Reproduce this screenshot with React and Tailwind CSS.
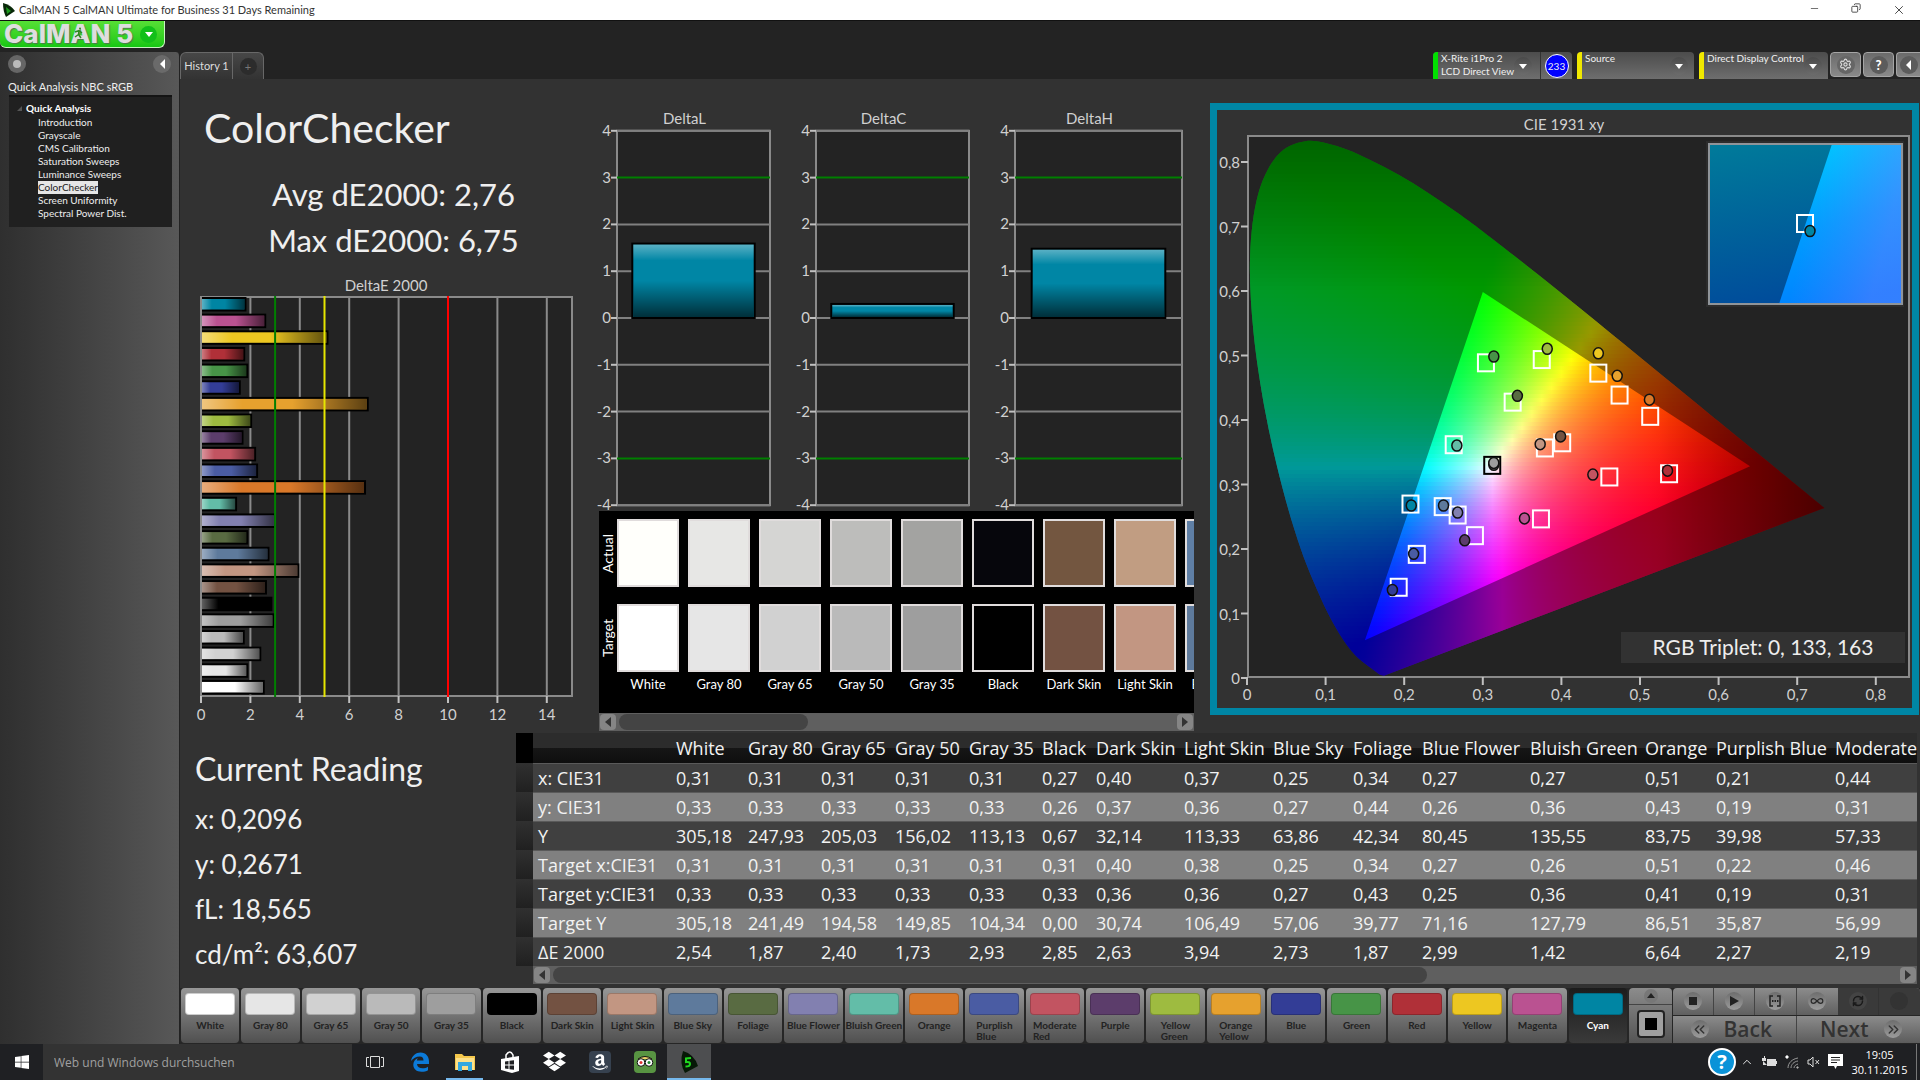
import React, { useState } from "react";
import { Minus, Copy, X, Settings, ChevronUp, ChevronsLeft, ChevronsRight, RefreshCw, Infinity as Loop } from "lucide-react";
import { FaDropbox, FaAmazon, FaWindows } from "react-icons/fa";

// name, target colour, dE2000
const PATCHES = [
  ["White", "#ffffff", 2.54],
  ["Gray 80", "#e6e6e6", 1.87],
  ["Gray 65", "#d1d1d1", 2.4],
  ["Gray 50", "#bababa", 1.73],
  ["Gray 35", "#9e9e9e", 2.93],
  ["Black", "#000000", 2.85],
  ["Dark Skin", "#735242", 2.63],
  ["Light Skin", "#c29682", 3.94],
  ["Blue Sky", "#5e7a9c", 2.73],
  ["Foliage", "#596b42", 1.87],
  ["Blue Flower", "#8280b0", 2.99],
  ["Bluish Green", "#63bda8", 1.42],
  ["Orange", "#d97829", 6.64],
  ["Purplish Blue", "#4a5ca3", 2.27],
  ["Moderate Red", "#c25461", 2.19],
  ["Purple", "#5c3d6b", 1.68],
  ["Yellow Green", "#9ebb40", 2.03],
  ["Orange Yellow", "#e6a12e", 6.75],
  ["Blue", "#333d96", 1.57],
  ["Green", "#479447", 1.87],
  ["Red", "#b03038", 1.75],
  ["Yellow", "#edc721", 5.12],
  ["Magenta", "#ba5291", 2.6],
  ["Cyan", "#0085a3", 1.8],
];

const ACTUAL = ["#fffffb", "#e7e7e5", "#d5d5d3", "#bdbdbb", "#a3a3a1", "#06060c", "#735640", "#c19d82", "#5f7fa5"];

const COLUMNS = [
  ["White", "w-[72px]"],
  ["Gray 80", "w-[73px]"],
  ["Gray 65", "w-[74px]"],
  ["Gray 50", "w-[74px]"],
  ["Gray 35", "w-[73px]"],
  ["Black", "w-[54px]"],
  ["Dark Skin", "w-[88px]"],
  ["Light Skin", "w-[89px]"],
  ["Blue Sky", "w-[80px]"],
  ["Foliage", "w-[69px]"],
  ["Blue Flower", "w-[108px]"],
  ["Bluish Green", "w-[115px]"],
  ["Orange", "w-[71px]"],
  ["Purplish Blue", "w-[119px]"],
  ["Moderate Red", "w-[130px]"],
];

const ROWS = [
  ["x: CIE31", "0,31 0,31 0,31 0,31 0,31 0,27 0,40 0,37 0,25 0,34 0,27 0,27 0,51 0,21 0,44"],
  ["y: CIE31", "0,33 0,33 0,33 0,33 0,33 0,26 0,37 0,36 0,27 0,44 0,26 0,36 0,43 0,19 0,31"],
  ["Y", "305,18 247,93 205,03 156,02 113,13 0,67 32,14 113,33 63,86 42,34 80,45 135,55 83,75 39,98 57,33"],
  ["Target x:CIE31", "0,31 0,31 0,31 0,31 0,31 0,31 0,40 0,38 0,25 0,34 0,27 0,26 0,51 0,22 0,46"],
  ["Target y:CIE31", "0,33 0,33 0,33 0,33 0,33 0,33 0,36 0,36 0,27 0,43 0,25 0,36 0,41 0,19 0,31"],
  ["Target Y", "305,18 241,49 194,58 149,85 104,34 0,00 30,74 106,49 57,06 39,77 71,16 127,79 86,51 35,87 56,99"],
  ["ΔE 2000", "2,54 1,87 2,40 1,73 2,93 2,85 2,63 3,94 2,73 1,87 2,99 1,42 6,64 2,27 2,19"],
];

// spectral locus, 2° observer
const LOCUS = [
  [0.1741, 0.005], [0.1689, 0.0069], [0.1644, 0.0109], [0.1566, 0.0177], [0.144, 0.0297], [0.1355, 0.0399],
  [0.1241, 0.0578], [0.1096, 0.0868], [0.0913, 0.1327], [0.0687, 0.2007], [0.0454, 0.295], [0.0235, 0.4127],
  [0.0082, 0.5384], [0.0039, 0.6548], [0.0139, 0.7502], [0.0389, 0.812], [0.0743, 0.8338], [0.1142, 0.8262],
  [0.1547, 0.8059], [0.1929, 0.7816], [0.2296, 0.7543], [0.2658, 0.7243], [0.3016, 0.6923], [0.3731, 0.6245],
  [0.4441, 0.5547], [0.5125, 0.4866], [0.5752, 0.4242], [0.627, 0.3725], [0.6915, 0.3083], [0.7347, 0.2653],
];

const TARGETS = [
  [0.304, 0.491], [0.375, 0.496], [0.447, 0.475], [0.474, 0.441], [0.513, 0.408], [0.338, 0.43],
  [0.263, 0.364], [0.401, 0.367], [0.379, 0.359], [0.461, 0.314], [0.537, 0.319], [0.208, 0.272],
  [0.249, 0.268], [0.268, 0.255], [0.29, 0.223], [0.374, 0.249], [0.216, 0.194], [0.193, 0.143],
];

const READINGS = [
  [0.314, 0.5, "#479447"], [0.382, 0.512, "#9ebb40"], [0.447, 0.505, "#edc721"], [0.471, 0.47, "#e6a12e"],
  [0.512, 0.433, "#d97829"], [0.344, 0.439, "#596b42"], [0.267, 0.362, "#63bda8"], [0.399, 0.376, "#735242"],
  [0.373, 0.364, "#c29682"], [0.44, 0.317, "#c25461"], [0.535, 0.323, "#b03038"], [0.209, 0.269, "#0085a3"],
  [0.25, 0.269, "#5e7a9c"], [0.268, 0.258, "#8280b0"], [0.277, 0.215, "#5c3d6b"], [0.353, 0.249, "#ba5291"],
  [0.212, 0.194, "#4a5ca3"], [0.185, 0.138, "#333d96"], [0.314, 0.332, "#777777"], [0.314, 0.335, "#9e9e9e"],
];

const cx = (v) => 30 + v * 786;
const cy = (v) => 569 - v * 645;

const xyToRgb = (x, y) => {
  const z = 1 - x - y;
  const rgb = [
    3.2406 * x - 1.5372 * y - 0.4986 * z,
    -0.9689 * x + 1.8758 * y + 0.0415 * z,
    0.0557 * x - 0.204 * y + 1.057 * z,
  ].map((c) => Math.max(0, c));
  const max = Math.max(...rgb, 0.001);
  const fade = Math.min(1, 1 - (x - 0.52) * 2.4, 1 - (y - 0.6) * 1.45);
  return `rgb(${rgb.map((c) => Math.round((c / max) * 255 * fade)).join(",")})`;
};

const smoothPath = (points) => {
  const p = points.map(([x, y]) => [cx(x), cy(y)]);
  let d = `M${p[0][0]} ${p[0][1]}`;
  for (let i = 0; i < p.length - 1; i++) {
    const a = p[i - 1] || p[i];
    const b = p[i];
    const c = p[i + 1];
    const e = p[i + 2] || c;
    d += ` C${b[0] + (c[0] - a[0]) / 6} ${b[1] + (c[1] - a[1]) / 6} ${c[0] - (e[0] - b[0]) / 6} ${c[1] - (e[1] - b[1]) / 6} ${c[0]} ${c[1]}`;
  }
  return d + " Z";
};

const LOCUS_PATH = smoothPath(LOCUS);
const GAMUT_PATH = `M${cx(0.3)} ${cy(0.6)} L${cx(0.64)} ${cy(0.33)} L${cx(0.15)} ${cy(0.06)} Z`;
const STRIPS = Array.from({ length: 136 }, (_, i) => 28 + i * 4);
const STOPS = Array.from({ length: 61 }, (_, i) => i / 60);

const CieChart = () => (
  <svg viewBox="0 0 695 598" className="block w-full h-auto font-[Lato,sans-serif]" role="img" aria-label="CIE 1931 xy">
    <defs>
      <clipPath id="locus">
        <path d={LOCUS_PATH} />
      </clipPath>
      {STRIPS.map((y) => (
        <linearGradient key={y} id={`strip${y}`} gradientUnits="userSpaceOnUse" x1={cx(0)} x2={cx(0.75)} y1="0" y2="0">
          {STOPS.map((s) => (
            <stop key={s} offset={s} stopColor={xyToRgb(s * 0.75, (569 - y - 2) / 645)} />
          ))}
        </linearGradient>
      ))}
      <linearGradient id="insetDark" x1="0" y1="0" x2="0.2" y2="1">
        <stop offset="0" stopColor="#007b9a" />
        <stop offset="1" stopColor="#004d9b" />
      </linearGradient>
      <linearGradient id="insetBright" x1="0.3" y1="0" x2="0.5" y2="1">
        <stop offset="0" stopColor="#00c6ff" />
        <stop offset="0.5" stopColor="#009dff" />
        <stop offset="1" stopColor="#0080ff" />
      </linearGradient>
      <linearGradient id="insetTint" x1="0.4" y1="0" x2="1" y2="0.2">
        <stop offset="0" stopColor="#7f7fff" stopOpacity="0" />
        <stop offset="1" stopColor="#7f7fff" stopOpacity="0.4" />
      </linearGradient>
    </defs>
    <text x="347" y="20" textAnchor="middle" className="text-[15px] fill-[#d0d0d0]">CIE 1931 xy</text>
    <rect x="31" y="26" width="661" height="541" fill="#232323" stroke="#8a8a8a" strokeWidth="2" />
    <g clipPath="url(#locus)">
      {STRIPS.map((y) => (
        <rect key={y} x="30" y={y} width="600" height="4" fill={`url(#strip${y})`} shapeRendering="crispEdges" />
      ))}
    </g>
    <path d={`${LOCUS_PATH} ${GAMUT_PATH}`} fillRule="evenodd" fill="#000" fillOpacity="0.4" />
    {[0, 1, 2, 3, 4, 5, 6, 7, 8].map((n) => (
      <g key={n} className="text-[15px] fill-[#d0d0d0]">
        <path d={`M${cx(n / 10)} 567v8M24 ${cy(n / 10) - 1}h7`} stroke="#c0c0c0" strokeWidth="2" />
        <text x={cx(n / 10)} y="590" textAnchor="middle">{n ? `0,${n}` : "0"}</text>
        <text x="23" y={cy(n / 10) + 5} textAnchor="end">{n ? `0,${n}` : "0"}</text>
      </g>
    ))}
    {TARGETS.map(([x, y]) => (
      <rect key={`${x}-${y}`} x={cx(x) - 8} y={cy(y) - 8} width="16" height="17" fill="none" stroke="#fff" strokeWidth="2" />
    ))}
    <rect x={cx(0.312) - 8} y={cy(0.332) - 8} width="16" height="17" fill="none" stroke="#000" strokeWidth="2" />
    {READINGS.map(([x, y, color]) => (
      <ellipse key={`${x}-${y}`} cx={cx(x)} cy={cy(y)} rx="5" ry="5.5" fill={color} stroke="#111" strokeWidth="1.5" />
    ))}
    {/* Zoomed inset */}
    <rect x="489" y="31" width="198" height="166" fill="#2c2c2c" />
    <rect x="492" y="34" width="193" height="160" fill="url(#insetDark)" />
    <path d="M615 34H685V194H562Z" fill="url(#insetBright)" />
    <path d="M615 34H685V194H562Z" fill="url(#insetTint)" />
    <rect x="492" y="34" width="193" height="160" fill="none" stroke="#8f9499" strokeWidth="2" />
    <rect x="580" y="105" width="16" height="17" fill="none" stroke="#fff" strokeWidth="2" />
    <ellipse cx="593" cy="121" rx="5" ry="5.5" fill="#0085a3" stroke="#111" strokeWidth="1.5" />
    {/* Triplet readout */}
    <rect x="404" y="522" width="284" height="31" fill="#323232" />
    <text x="546" y="545" textAnchor="middle" className="text-[21px] fill-[#ededed]">RGB Triplet: 0, 133, 163</text>
  </svg>
);

const DeltaEChart = () => {
  const x = (v) => 21 + v * 24.7;
  return (
    <svg viewBox="0 0 415 460" className="block w-full h-auto font-[Lato,sans-serif]" role="img" aria-label="DeltaE 2000">
      <defs>
        <linearGradient id="sheenX">
          <stop offset="0" stopColor="#fff" stopOpacity="0.4" />
          <stop offset="0.25" stopColor="#fff" stopOpacity="0" />
          <stop offset="0.55" stopColor="#000" stopOpacity="0" />
          <stop offset="1" stopColor="#000" stopOpacity="0.6" />
        </linearGradient>
      </defs>
      <text x="206" y="21" textAnchor="middle" className="text-[15px] fill-[#d0d0d0]">DeltaE 2000</text>
      <rect x="21" y="27" width="371" height="399" fill="#232323" stroke="#8a8a8a" strokeWidth="2" />
      {[0, 2, 4, 6, 8, 10, 12, 14].map((n) => (
        <g key={n}>
          <path d={`M${x(n)} 27V426`} stroke="#8a8a8a" strokeWidth="2" />
          <path d={`M${x(n)} 426v7`} stroke="#c0c0c0" strokeWidth="2" />
          <text x={x(n)} y="450" textAnchor="middle" className="text-[15px] fill-[#d0d0d0]">{n}</text>
        </g>
      ))}
      {[...PATCHES].reverse().map(([name, color, de], i) => (
        <g key={name}>
          <rect x="21" y={28 + i * 16.65} width={de * 24.7} height="12.5" fill={color} stroke="#000" strokeWidth="2" />
          <rect x="21" y={29 + i * 16.65} width={de * 24.7 - 1} height="10.5" fill="url(#sheenX)" />
        </g>
      ))}
      <path d="M21 27V426" stroke="#8a8a8a" strokeWidth="2" />
      <path d={`M${x(3)} 26V427`} stroke="#007f00" strokeWidth="2" />
      <path d={`M${x(5)} 26V427`} stroke="#e6e600" strokeWidth="2" />
      <path d={`M${x(10)} 26V427`} stroke="#ff0000" strokeWidth="2" />
    </svg>
  );
};

const DeltaChart = ({ title, width, value }) => {
  const plot = width - 46 + (width > 200 ? 11 : 0);
  const y = (v) => 215 - v * 46.8;
  const pad = plot * 0.1;
  return (
    <svg viewBox={`0 0 ${width} 408`} className="block w-full h-auto font-[Lato,sans-serif]" role="img" aria-label={title}>
      <defs>
        <linearGradient id="sheenY" x1="0" x2="0" y1="0" y2="1">
          <stop offset="0" stopColor="#fff" stopOpacity="0.35" />
          <stop offset="0.22" stopColor="#fff" stopOpacity="0" />
          <stop offset="0.5" stopColor="#000" stopOpacity="0" />
          <stop offset="1" stopColor="#000" stopOpacity="0.65" />
        </linearGradient>
      </defs>
      <text x={13 + plot / 2} y="21" textAnchor="middle" className="text-[15px] fill-[#d0d0d0]">{title}</text>
      <rect x="22" y={y(4)} width={plot} height={y(-4) - y(4)} fill="#232323" stroke="#8a8a8a" strokeWidth="2" />
      {[4, 3, 2, 1, 0, -1, -2, -3, -4].map((n) => (
        <g key={n}>
          <path d={`M22 ${y(n)}h${plot}`} stroke={Math.abs(n) === 3 ? "#007f00" : "#808080"} strokeWidth="2" />
          <path d={`M16 ${y(n)}h6`} stroke="#c0c0c0" strokeWidth="2" />
          <text x="16" y={y(n) + 5} textAnchor="end" className="text-[15px] fill-[#d0d0d0]">{n}</text>
        </g>
      ))}
      <rect x={22 + pad} y={y(value)} width={plot - pad * 2} height={y(0) - y(value)} fill="#0086a5" stroke="#000" strokeWidth="2" />
      <rect x={23 + pad} y={y(value) + 1} width={plot - pad * 2 - 2} height={y(0) - y(value) - 2} fill="url(#sheenY)" />
    </svg>
  );
};

const ScrollBar = ({ thumb, label }) => (
  <div className="flex items-center h-[18px] bg-[#5f5f5f] px-px gap-[3px]">
    <button aria-label={`Scroll ${label} left`} className="w-4 h-4 rounded bg-[#858585] flex items-center justify-center">
      <svg viewBox="0 0 6 10" className="w-[6px] h-[10px]"><path d="M6 0V10L0 5Z" fill="#333" /></svg>
    </button>
    <div className="flex-1 h-full py-px">
      <div className={`h-4 rounded-lg bg-[#444] ${thumb}`} />
    </div>
    <button aria-label={`Scroll ${label} right`} className="w-4 h-4 rounded bg-[#858585] flex items-center justify-center">
      <svg viewBox="0 0 6 10" className="w-[6px] h-[10px]"><path d="M0 0V10L6 5Z" fill="#333" /></svg>
    </button>
  </div>
);

const TitleBar = () => (
  <header className="h-[20px] bg-white flex items-center pl-[3px] text-[#333]">
    <svg viewBox="0 0 12 14" className="w-3 h-[14px] mr-1"><path d="M0 0Q8 2 12 8L3 14Q0 8 0 0Z" fill="#082808" /><path d="M3 4L8 8L4 11Z" fill="#1c9a1c" /></svg>
    <h1 className="text-[11px] flex-1 font-[Lato,sans-serif]">CalMAN 5 CalMAN Ultimate for Business 31 Days Remaining</h1>
    <div className="flex">
      <button aria-label="Minimize" className="w-[42px] flex justify-center"><Minus size={11} strokeWidth={1.5} /></button>
      <button aria-label="Restore" className="w-[42px] flex justify-center"><Copy size={10} strokeWidth={2} className="-scale-x-100" /></button>
      <button aria-label="Close" className="w-[43px] flex justify-center"><X size={14} strokeWidth={1.5} /></button>
    </div>
  </header>
);

const Caret = () => (
  <span className="w-[18px] h-[18px] rounded-full bg-linear-to-b from-[#4a4a4a] to-[#6c6c6c] flex items-center justify-center pointer-events-none">
    <svg viewBox="0 0 8 5" className="w-2 h-[5px]"><path d="M0 0H8L4 5Z" fill="#fff" /></svg>
  </span>
);

const Device = ({ title, option, bar, width, caret, children }) => (
  <div className={`flex h-[27px] rounded-t-sm overflow-hidden bg-linear-to-b from-[#4c4c4c] to-[#6e6e6e] text-[#f0f0f0] text-[10px] leading-[13px] ${width}`}>
    <span className={`w-[5px] ${bar}`} />
    <label className="flex-1 pl-[3px] flex flex-col relative">
      {title && <span>{title}</span>}
      <select aria-label={title || option} className="appearance-none bg-transparent outline-none h-[13px] w-full">
        <option>{option}</option>
      </select>
      <span className={`absolute top-[5px] ${caret}`}><Caret /></span>
    </label>
    {children}
  </div>
);

const TopBar = () => (
  <div className="flex justify-between items-end">
    <div className="flex h-[27px] rounded-t-md border border-b-0 border-[#686868] bg-linear-to-b from-[#474747] to-[#333] text-[#ddd] overflow-hidden">
      <button className="w-[52px] text-[11px] border-r border-[#686868]">History 1</button>
      <button aria-label="Add history" className="w-[30px] flex items-center justify-center">
        <span className="w-[17px] h-[17px] rounded-full bg-[#2c2c2c] text-[#777] text-[11px] leading-[17px]">+</span>
      </button>
    </div>
    <div className="flex items-start">
      <Device title="X-Rite i1Pro 2" option="LCD Direct View" bar="bg-[#00e000]" width="w-[139px] mr-[5px]" caret="right-2">
        <span className="w-[32px] border-l border-[#333] flex items-center justify-center">
          <span className="w-[24px] h-[24px] rounded-full bg-[#0000ff] border border-white text-[10px] leading-[22px] text-center">233</span>
        </span>
      </Device>
      <Device option="Source" bar="bg-[#f0e800]" width="w-[117px] mr-[5px]" caret="right-[6px]" />
      <Device option="Direct Display Control" bar="bg-[#f0e800]" width="w-[129px] mr-[2px]" caret="right-[6px]" />
      <div className="flex gap-[2px] h-[25px]">
        <button aria-label="Settings" className="w-[31px] rounded border border-[#a5a5a5] bg-linear-to-b from-[#6b6b6b] to-[#8a8a8a] flex items-center justify-center">
          <span className="w-[18px] h-[18px] rounded-full bg-[#666] flex items-center justify-center text-[#ddd]"><Settings size={13} /></span>
        </button>
        <button aria-label="Help" className="w-[31px] rounded border border-[#a5a5a5] bg-linear-to-b from-[#6b6b6b] to-[#8a8a8a] flex items-center justify-center">
          <span className="w-[18px] h-[18px] rounded-full bg-[#5c5c5c] text-white text-[13px] leading-[18px] font-black">?</span>
        </button>
        <button aria-label="Collapse panel" className="w-[24px] rounded-l border border-r-0 border-[#a5a5a5] bg-linear-to-b from-[#6b6b6b] to-[#8a8a8a] flex items-center justify-center">
          <span className="w-[18px] h-[18px] rounded-full bg-[#5c5c5c] flex items-center justify-center">
            <svg viewBox="0 0 5 10" className="w-[5px] h-[10px]"><path d="M5 0V10L0 5Z" fill="#fff" /></svg>
          </span>
        </button>
      </div>
    </div>
  </div>
);

const PAGES = [
  "Introduction",
  "Grayscale",
  "CMS Calibration",
  "Saturation Sweeps",
  "Luminance Sweeps",
  "ColorChecker",
  "Screen Uniformity",
  "Spectral Power Dist.",
];

const Sidebar = () => (
  <aside className="w-[180px] shrink-0 bg-linear-to-r from-[#2f2f2f] to-[#585858] border-r border-[#222] rounded-tr text-[#eee]">
    <div className="flex justify-between px-2 pt-[3px]">
      <button aria-label="Record" className="w-[18px] h-[18px] rounded-full bg-[#666] flex items-center justify-center">
        <span className="w-2 h-2 rounded-full bg-[#bbb]" />
      </button>
      <button aria-label="Collapse sidebar" className="w-[18px] h-[18px] rounded-full bg-[#6a6a6a] flex items-center justify-center">
        <svg viewBox="0 0 5 10" className="w-[5px] h-[10px]"><path d="M5 0V10L0 5Z" fill="#fff" /></svg>
      </button>
    </div>
    <h2 className="pl-2 mt-[6px] text-[11px] leading-4">Quick Analysis NBC sRGB</h2>
    <nav className="ml-[9px] mr-[7px] bg-[#202020] border-t-2 border-[#141414] h-[132px] pt-[5px] text-[10px] leading-[13px]">
      <div className="flex items-center pl-2 mb-px font-bold text-white">
        <svg viewBox="0 0 5 5" className="w-[5px] h-[5px] mr-1"><path d="M5 0V5H0Z" fill="#555" /></svg>
        Quick Analysis
      </div>
      <ul className="pl-[29px]">
        {PAGES.map((page) => (
          <li key={page}>
            <a href="#" className={page === "ColorChecker" ? "inline-block bg-[#e6e6e6] text-[#222]" : "inline-block"}>{page}</a>
          </li>
        ))}
      </ul>
    </nav>
  </aside>
);

const PatchStrip = () => (
  <div className="ml-1 mr-[6px]">
    <div className="bg-black h-[202px] pt-2 flex overflow-hidden text-white text-[13px]">
      <div className="w-[18px] shrink-0 flex flex-col gap-[17px] text-[14px]">
        <span className="h-[68px] [writing-mode:vertical-rl] rotate-180 text-center leading-[17px]">Actual</span>
        <span className="h-[68px] [writing-mode:vertical-rl] rotate-180 text-center leading-[17px]">Target</span>
      </div>
      {ACTUAL.map((color, i) => (
        <div key={color} className="w-[62px] mr-[9px] shrink-0">
          <div className="h-[68px] border-2 border-[#e0dcdc]" style={{ background: color }} />
          <div className="h-[68px] mt-[17px] border-2 border-[#e0dcdc]" style={{ background: PATCHES[i][1] }} />
          <div className="text-center leading-[24px] whitespace-nowrap">{PATCHES[i][0]}</div>
        </div>
      ))}
    </div>
    <ScrollBar label="patches" thumb="w-[34%]" />
  </div>
);

const ReadingTable = () => (
  <div className="flex-1 min-w-0 mr-[3px]">
    <div className="overflow-hidden">
      <table className="table-fixed w-max text-left text-[18px] text-[#f2f2f2] font-['Open_Sans',sans-serif] whitespace-nowrap">
        <thead>
          <tr className="h-[30px] bg-linear-to-b from-[#2c2c2c] from-50% via-[#161616] via-50% to-[#0e0e0e]">
            <td className="w-[17px] p-0 bg-black" />
            <td className="w-[138px] p-0" />
            {COLUMNS.map(([name, width]) => (
              <th key={name} scope="col" className={`p-0 pl-[5px] font-normal leading-[28px] ${width}`}>{name}</th>
            ))}
          </tr>
        </thead>
        <tbody>
          {ROWS.map(([label, values], i) => (
            <tr key={label} className={i % 2 ? "bg-[#808080]" : "bg-[#404040]"}>
              <td className="p-0 bg-linear-to-b from-[#303030] to-[#202020]" />
              <th scope="row" className="p-0 pl-[5px] font-normal leading-[28px] border-t border-[#5a5a5a]">{label}</th>
              {values.split(" ").map((value, j) => (
                <td key={j} className="p-0 pl-[5px] leading-[28px] border-t border-[#5a5a5a]">{value}</td>
              ))}
            </tr>
          ))}
        </tbody>
      </table>
    </div>
    <div className="ml-[17px]">
      <ScrollBar label="table" thumb="w-[65%]" />
    </div>
  </div>
);

const Round = ({ children }) => (
  <span className="w-[18px] h-[18px] rounded-full bg-linear-to-b from-[#6d6d6d] to-[#9c9c9c] flex items-center justify-center">{children}</span>
);

const Transport = () => (
  <div className="w-[292px] shrink-0 flex text-[#2a2a2a]">
    <div className="w-[43px] mx-px rounded-t bg-linear-to-b from-[#8c8c8c] to-[#555] flex flex-col items-center">
      <button aria-label="Expand" className="h-[17px] w-full flex items-center justify-center border-b border-[#444]">
        <span className="w-[14px] h-[14px] rounded-full bg-[#777] flex items-center justify-center">
          <svg viewBox="0 0 8 5" className="w-2 h-[5px]"><path d="M0 5H8L4 0Z" fill="#222" /></svg>
        </span>
      </button>
      <button aria-label="Pattern window" className="mt-[5px] w-7 h-7 rounded border-2 border-[#222] bg-[#a0a0a0] flex items-center justify-center">
        <span className="w-3 h-3 bg-black" />
      </button>
    </div>
    <div className="flex-1 flex flex-col gap-px">
      <div className="grid grid-cols-6 h-[27px] bg-linear-to-b from-[#8c8c8c] to-[#606060] rounded-t overflow-hidden">
        <button aria-label="Stop" className="flex items-center justify-center border-r border-[#444]"><Round><span className="w-2 h-2 bg-[#222]" /></Round></button>
        <button aria-label="Play" className="flex items-center justify-center border-r border-[#444]"><Round><svg viewBox="0 0 9 10" className="w-[9px] h-[10px]"><path d="M0 0L9 5L0 10Z" fill="#222" /></svg></Round></button>
        <button aria-label="Read series" className="flex items-center justify-center border-r border-[#444]">
          <Round><svg viewBox="0 0 12 12" className="w-3 h-3"><path d="M4 1H1V11H4M8 1H11V11H8" fill="none" stroke="#222" strokeWidth="1.5" /><path d="M3 6H9.500" fill="none" stroke="#222" strokeWidth="2" strokeDasharray="1.500 1" /></svg></Round>
        </button>
        <button aria-label="Loop" className="flex items-center justify-center"><Round><Loop size={14} /></Round></button>
        <button aria-label="Refresh" className="flex items-center justify-center bg-[#3a3a3a] border-r border-[#333]">
          <span className="w-[18px] h-[18px] rounded-full bg-[#444] flex items-center justify-center text-[#1a1a1a]"><RefreshCw size={12} strokeWidth={3} /></span>
        </button>
        <button aria-label="Record" className="flex items-center justify-center bg-[#3a3a3a]"><span className="w-[18px] h-[18px] rounded-full bg-[#333]" /></button>
      </div>
      <div className="grid grid-cols-2 flex-1 bg-linear-to-b from-[#8c8c8c] to-[#5c5c5c] text-[21px] leading-[26px] font-semibold font-['Open_Sans',sans-serif] text-[#333]">
        <button className="flex items-center justify-center gap-[15px] pr-[6px] border-r border-[#444]"><Round><ChevronsLeft size={17} /></Round>Back</button>
        <button className="flex items-center justify-center gap-[16px] pl-[6px]">Next<Round><ChevronsRight size={17} /></Round></button>
      </div>
    </div>
  </div>
);

const PatchBar = () => {
  const [active, setActive] = useState("Cyan");
  return (
    <div className="flex h-[56px] pb-px bg-[#262626]">
      <div className="flex-1 min-w-0 grid grid-cols-24">
        {PATCHES.map(([name, color]) => (
          <button
            key={name}
            onClick={() => setActive(name)}
            className={
              name === active
                ? "mx-px min-w-0 rounded pt-[5px] flex flex-col items-center bg-linear-to-b from-[#1c1c1c] to-[#3a3a3a] text-white"
                : "mx-px min-w-0 rounded pt-[5px] flex flex-col items-center bg-linear-to-b from-[#979797] to-[#505050] text-[#222]"
            }
          >
            <span className="w-[50px] h-[22px] rounded border border-black/20" style={{ background: color }} />
            <span className="mt-[5px] text-[10px] leading-[11px] font-bold text-left">
              {name.length > 12 || name.startsWith("Moderate") || name.startsWith("Yellow ")
                ? name.split(" ").map((word) => <span key={word} className="block">{word}</span>)
                : <span className="whitespace-nowrap">{name}</span>}
            </span>
          </button>
        ))}
      </div>
      <Transport />
    </div>
  );
};

const TaskBar = () => (
  <footer className="h-[36px] bg-[#1f2023] flex items-stretch text-white font-['Open_Sans',sans-serif]">
    <button aria-label="Start" className="w-[43px] flex items-center justify-center"><FaWindows size={16} /></button>
    <input aria-label="Search" placeholder="Web und Windows durchsuchen" className="w-[309px] bg-[#333] pl-[11px] pt-0.5 text-[12px] placeholder:text-[#a0a0a0] outline-none" />
    <button aria-label="Task view" className="w-[45px] flex items-center justify-center">
      <svg viewBox="0 0 18 14" className="w-[18px] h-[14px]" fill="none" stroke="#ddd"><path d="M4.500 1.500h9v11h-9zM3 2.500H.5v9H3M15 2.500h2.500v9H15" /></svg>
    </button>
    <button aria-label="Edge" className="w-[45px] flex items-center justify-center text-[#0c7ad8]">
      <svg viewBox="0 0 20 20" className="w-5 h-5">
        <path d="M1 9C2 3.500 6 .5 10.500 .5C16 .5 19 4.500 19 9.500V12H7C7.200 15 9.500 16.300 12.500 16.300C14.500 16.300 16.500 15.700 18 14.700V18.300C16.300 19.300 14 19.800 11.500 19.800C6.500 19.800 3.300 17 3.300 12.800C3.300 9.800 5 7.300 7.800 6C7.300 6.800 7 7.800 6.900 8.500H13.500C13.500 6 12.300 4.600 9.800 4.600C6.300 4.600 3 6.500 1 9Z" fill="currentColor" />
      </svg>
    </button>
    <button aria-label="Explorer" className="w-[45px] flex items-center justify-center relative">
      <svg viewBox="0 0 20 18" className="w-5 h-[18px]"><path d="M0 1H7L9 3H20V17H0Z" fill="#f5c84c" /><path d="M1 5H19V17H1Z" fill="#fde18a" /><path d="M3 9H17V18H13V13H7V18H3Z" fill="#33a8e0" /></svg>
      <span className="absolute bottom-0 inset-x-1 h-0.5 bg-[#76b9ed]" />
    </button>
    <button aria-label="Store" className="w-[45px] flex items-center justify-center">
      <svg viewBox="0 0 20 22" className="w-5 h-[22px]"><path d="M6 8V4Q10 -2 13 4V6" fill="none" stroke="#fff" strokeWidth="1.500" /><path d="M1 8L19 5V20L12 22L1 19Z" fill="#fff" /><path d="M5 10.500L8.500 10V13.500H5ZM9.500 9.800L14 9.200V13.500H9.500ZM5 14.500H8.500V18L5 17.500ZM9.500 14.500H14V18.800L9.500 18.200Z" fill="#1f2023" /></svg>
    </button>
    <button aria-label="Dropbox" className="w-[45px] flex items-center justify-center"><FaDropbox size={23} /></button>
    <button aria-label="Amazon" className="w-[45px] flex items-center justify-center">
      <span className="w-[22px] h-[22px] rounded-sm bg-[#36414f] flex items-center justify-center"><FaAmazon size={18} /></span>
    </button>
    <button aria-label="TripAdvisor" className="w-[45px] flex items-center justify-center">
      <span className="w-[22px] h-[22px] rounded-sm bg-[#589442] flex items-center justify-center">
        <svg viewBox="0 0 18 12" className="w-[18px] h-3"><path d="M2 3Q9 -2 16 3" fill="#f3d36b" stroke="#111" /><circle cx="5" cy="6.500" r="3.800" fill="#fff" stroke="#111" /><circle cx="13" cy="6.500" r="3.800" fill="#fff" stroke="#111" /><circle cx="5" cy="6.500" r="1.500" fill="#d33" /><circle cx="13" cy="6.500" r="1.500" fill="#283" /></svg>
      </span>
    </button>
    <button aria-label="CalMAN" className="w-[44px] bg-[#4d4e50] border-b-2 border-[#76b9ed] flex items-center justify-center pt-0.5">
      <svg viewBox="0 0 20 22" className="w-5 h-[22px]"><path d="M4 0Q15 3 19 15L6 22Q0 12 4 0Z" fill="#061806" /><path d="M12 7L7 7.500V11Q11 10.500 11 13T6.500 15.500" fill="none" stroke="#1fd61f" strokeWidth="2" /></svg>
    </button>
    <div className="ml-auto flex items-center">
      <button aria-label="Help" className="w-7 h-7 rounded-full bg-[#0a93d8] border-2 border-white text-[20px] leading-6 font-bold">?</button>
      <button aria-label="Show hidden icons" className="ml-1 w-[14px] flex justify-center"><ChevronUp size={14} strokeWidth={1.5} /></button>
      <svg viewBox="0 0 15 12" className="w-[15px] h-3 ml-2" fill="#ddd"><path d="M5 3H14V5H15V8H14V10H5ZM0 2H2V0H3V2H4V5H0ZM1 5V9H5" /></svg>
      <svg viewBox="0 0 14 14" className="w-[14px] h-[14px] ml-2" fill="none" stroke="#999"><path d="M3 13C3 8 7 4 13 3M6 13C6 9.500 9 6.500 13 6M9 13C9 11 11 9.500 13 9" /><circle cx="2" cy="2" r="1.200" fill="#fff" stroke="#fff" /><circle cx="12.500" cy="12.500" r="0.800" fill="#ccc" /></svg>
      <svg viewBox="0 0 13 12" className="w-[13px] h-3 ml-2" fill="none" stroke="#ddd"><path d="M1 4H3L6 1V11L3 8H1ZM8.500 4L12 8M12 4L8.500 8" /></svg>
      <svg viewBox="0 0 15 15" className="w-[15px] h-[15px] ml-2"><path d="M0 0H15V12H9L7.500 15L6 12H0Z" fill="#fff" /><path d="M3 3.500H12M3 6H12M3 8.500H9" stroke="#222" /></svg>
      <time className="w-[73px] text-center text-[11px] leading-[15px]">19:05<br />30.11.2015</time>
      <span className="h-[36px] border-l border-[#777] w-[4px]" />
    </div>
  </footer>
);

const App = () => {
  return (
    <div className="min-h-screen bg-[#232323] font-[Lato,sans-serif] overflow-hidden">
      <TitleBar />
      <div className="h-[32px] border-t border-[#111]">
        <button aria-label="CalMAN menu" className="relative w-[165px] h-[27px] rounded-b-md bg-linear-to-b from-[#55df35] to-[#12c812] border-b border-r border-[#c8f5c0] flex items-center pl-1">
          <span className="font-[Inter,sans-serif] font-extrabold text-[26px] leading-[26px] text-[#dedede] [text-shadow:1px_1px_1px_#4d7a4d] whitespace-nowrap">CalMAN 5</span>
          <svg viewBox="0 0 10 12" className="absolute left-[74px] top-[6px] w-[10px] h-3" fill="none" stroke="#2c8a22" strokeWidth="1.5"><circle cx="6" cy="1.500" r="1" fill="#2c8a22" stroke="none" /><path d="M1 5L5 3.500L8 6M5 4L4.500 7.500L7 11M4.500 7.500L1 10" /></svg>
          <span className="absolute right-[7px] top-[5px] w-[17px] h-[17px] rounded-full bg-[#12c01a] flex items-center justify-center">
            <svg viewBox="0 0 8 5" className="w-2 h-[5px]"><path d="M0 0H8L4 5Z" fill="#fff" /></svg>
          </span>
        </button>
      </div>
      <div className="flex">
        <Sidebar />
        <div className="flex-1 min-w-0">
          <TopBar />
          <main className="bg-[#323232] text-[#efefef] pb-1">
            <div className="grid grid-cols-[415fr_605fr_720fr]">
              <section className="min-w-0 pt-[25px]">
                <h2 className="pl-[24px] text-[41px] leading-[48px]">ColorChecker</h2>
                <div className="mt-[19px] mb-[7px] pl-[12px] text-center text-[31px] leading-[46px]">
                  <p>Avg dE2000: 2,76</p>
                  <p>Max dE2000: 6,75</p>
                </div>
                <DeltaEChart />
              </section>
              <section className="min-w-0 pt-[24px]">
                <div className="grid grid-cols-[199fr_199fr_202fr] pr-[5px]">
                  <DeltaChart title="DeltaL" width={199} value={1.59} />
                  <DeltaChart title="DeltaC" width={199} value={0.3} />
                  <DeltaChart title="DeltaH" width={202} value={1.48} />
                </div>
                <PatchStrip />
              </section>
              <section className="min-w-0 pt-[24px] pl-[10px] pr-px">
                <div className="border-[7px] border-[#0086a5]">
                  <CieChart />
                </div>
              </section>
            </div>
            <div className="flex mt-0.5">
              <section className="w-[336px] shrink-0 pl-[15px] pt-[15px]">
                <h2 className="text-[32px] leading-[42px]">Current Reading</h2>
                <ul className="mt-[7px] text-[26px] leading-[45px]">
                  <li>x: 0,2096</li>
                  <li>y: 0,2671</li>
                  <li>fL: 18,565</li>
                  <li>cd/m²: 63,607</li>
                </ul>
              </section>
              <ReadingTable />
            </div>
          </main>
          <PatchBar />
        </div>
      </div>
      <TaskBar />
    </div>
  );
};

export default App;
